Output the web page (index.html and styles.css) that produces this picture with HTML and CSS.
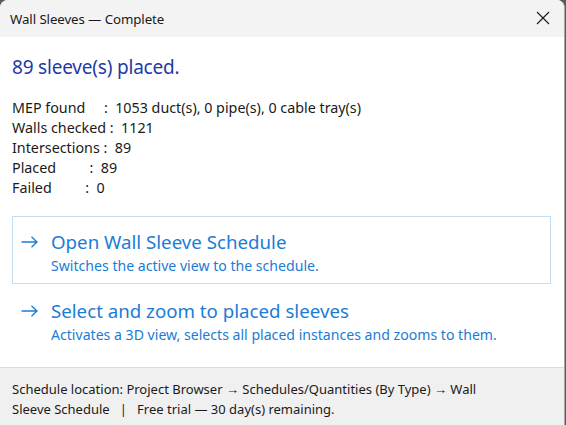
FILE: index.html
```html
<!DOCTYPE html>
<html>
<head>
<meta charset="utf-8">
<link rel="stylesheet" href="styles.css">
</head>
<body>
<div class="window">
  <div class="titlebar">
    <span class="title">Wall Sleeves — Complete</span>
    <svg class="close" width="14" height="14" viewBox="0 0 14 14"><path d="M1 1 L13 13 M13 1 L1 13" stroke="#1a1a1a" stroke-width="1.1" fill="none"/></svg>
  </div>
  <div class="content">
    <div class="heading">89 sleeve(s) placed.</div>
    <div class="info">
      <div>MEP found&nbsp;&nbsp;&nbsp;&nbsp; :&nbsp; 1053 duct(s), 0 pipe(s), 0 cable tray(s)</div>
      <div>Walls checked :&nbsp; 1121</div>
      <div>Intersections :&nbsp; 89</div>
      <div>Placed&nbsp;&nbsp;&nbsp;&nbsp;&nbsp;&nbsp;&nbsp;&nbsp; :&nbsp; 89</div>
      <div>Failed&nbsp;&nbsp;&nbsp;&nbsp;&nbsp;&nbsp;&nbsp;&nbsp; :&nbsp; 0</div>
    </div>
    <div class="links">
      <div class="cmd hover">
        <svg class="arrow" width="17" height="12" viewBox="0 0 17 12"><path d="M0.5 6 H16 M10.5 0.7 L16 6 L10.5 11.3" stroke="#1a7cd6" stroke-width="1.3" fill="none"/></svg>
        <div class="cmd-text">
          <div class="cmd-title">Open Wall Sleeve Schedule</div>
          <div class="cmd-sub">Switches the active view to the schedule.</div>
        </div>
      </div>
      <div class="cmd">
        <svg class="arrow" width="17" height="12" viewBox="0 0 17 12"><path d="M0.5 6 H16 M10.5 0.7 L16 6 L10.5 11.3" stroke="#1a7cd6" stroke-width="1.3" fill="none"/></svg>
        <div class="cmd-text">
          <div class="cmd-title">Select and zoom to placed sleeves</div>
          <div class="cmd-sub">Activates a 3D view, selects all placed instances and zooms to them.</div>
        </div>
      </div>
    </div>
  </div>
  <div class="footer">Schedule location: Project Browser → Schedules/Quantities (By Type) → Wall Sleeve Schedule &nbsp;&nbsp;|&nbsp;&nbsp; Free trial — 30 day(s) remaining.</div>
</div>
</body>
</html>
```
FILE: styles.css
```css
html, body {
  margin: 0;
  padding: 0;
  background: #5a5a5a;
}
body {
  width: 566px;
  height: 425px;
  overflow: hidden;
  font-family: "Noto Sans", "Open Sans", sans-serif;
}
.window {
  width: 564px;
  height: 425px;
  border-right: 1px solid #a8a8a8;
  border-top-left-radius: 8px;
  border-top-right-radius: 8px;
  background: #ffffff;
  display: flex;
  flex-direction: column;
  overflow: hidden;
}
.titlebar {
  height: 37px;
  background: #f3f3f3;
  display: flex;
  align-items: center;
  justify-content: space-between;
  padding: 0 14px 0 10px;
  flex-shrink: 0;
}
.title {
  font-size: 13.3px;
  color: #1a1a1a;
  letter-spacing: -0.1px;
}
.close {
  display: block;
  margin-top: -1px;
}
.content {
  flex: 1;
  padding: 17px 13px 0 12px;
  background: #ffffff;
}
.heading {
  font-size: 19px;
  color: #1f3aa6;
  line-height: 26px;
  letter-spacing: -0.2px;
}
.info {
  margin-top: 18px;
  font-size: 14.3px;
  line-height: 20px;
  color: #1a1a1a;
  white-space: nowrap;
}
.links {
  margin-top: 18px;
  display: flex;
  flex-direction: column;
  gap: 1px;
}
.cmd {
  display: flex;
  align-items: flex-start;
  padding: 14px 10px 7px 8px;
  border: 1px solid transparent;
  color: #1a7cd6;
}
.cmd.hover {
  border-color: #c2def5;
}
.arrow {
  display: block;
  margin-top: 5px;
  margin-right: 13px;
  flex-shrink: 0;
}
.cmd-title {
  font-size: 18.7px;
  line-height: 22px;
}
.cmd-sub {
  margin-top: 3px;
  font-size: 14.1px;
  line-height: 20px;
}
.footer {
  flex-shrink: 0;
  height: 58px;
  box-sizing: border-box;
  border-top: 1px solid #dcdcdc;
  background: #f0f0f0;
  padding: 11px 50px 0 12px;
  font-size: 13px;
  line-height: 20px;
  color: #1a1a1a;
}
```
